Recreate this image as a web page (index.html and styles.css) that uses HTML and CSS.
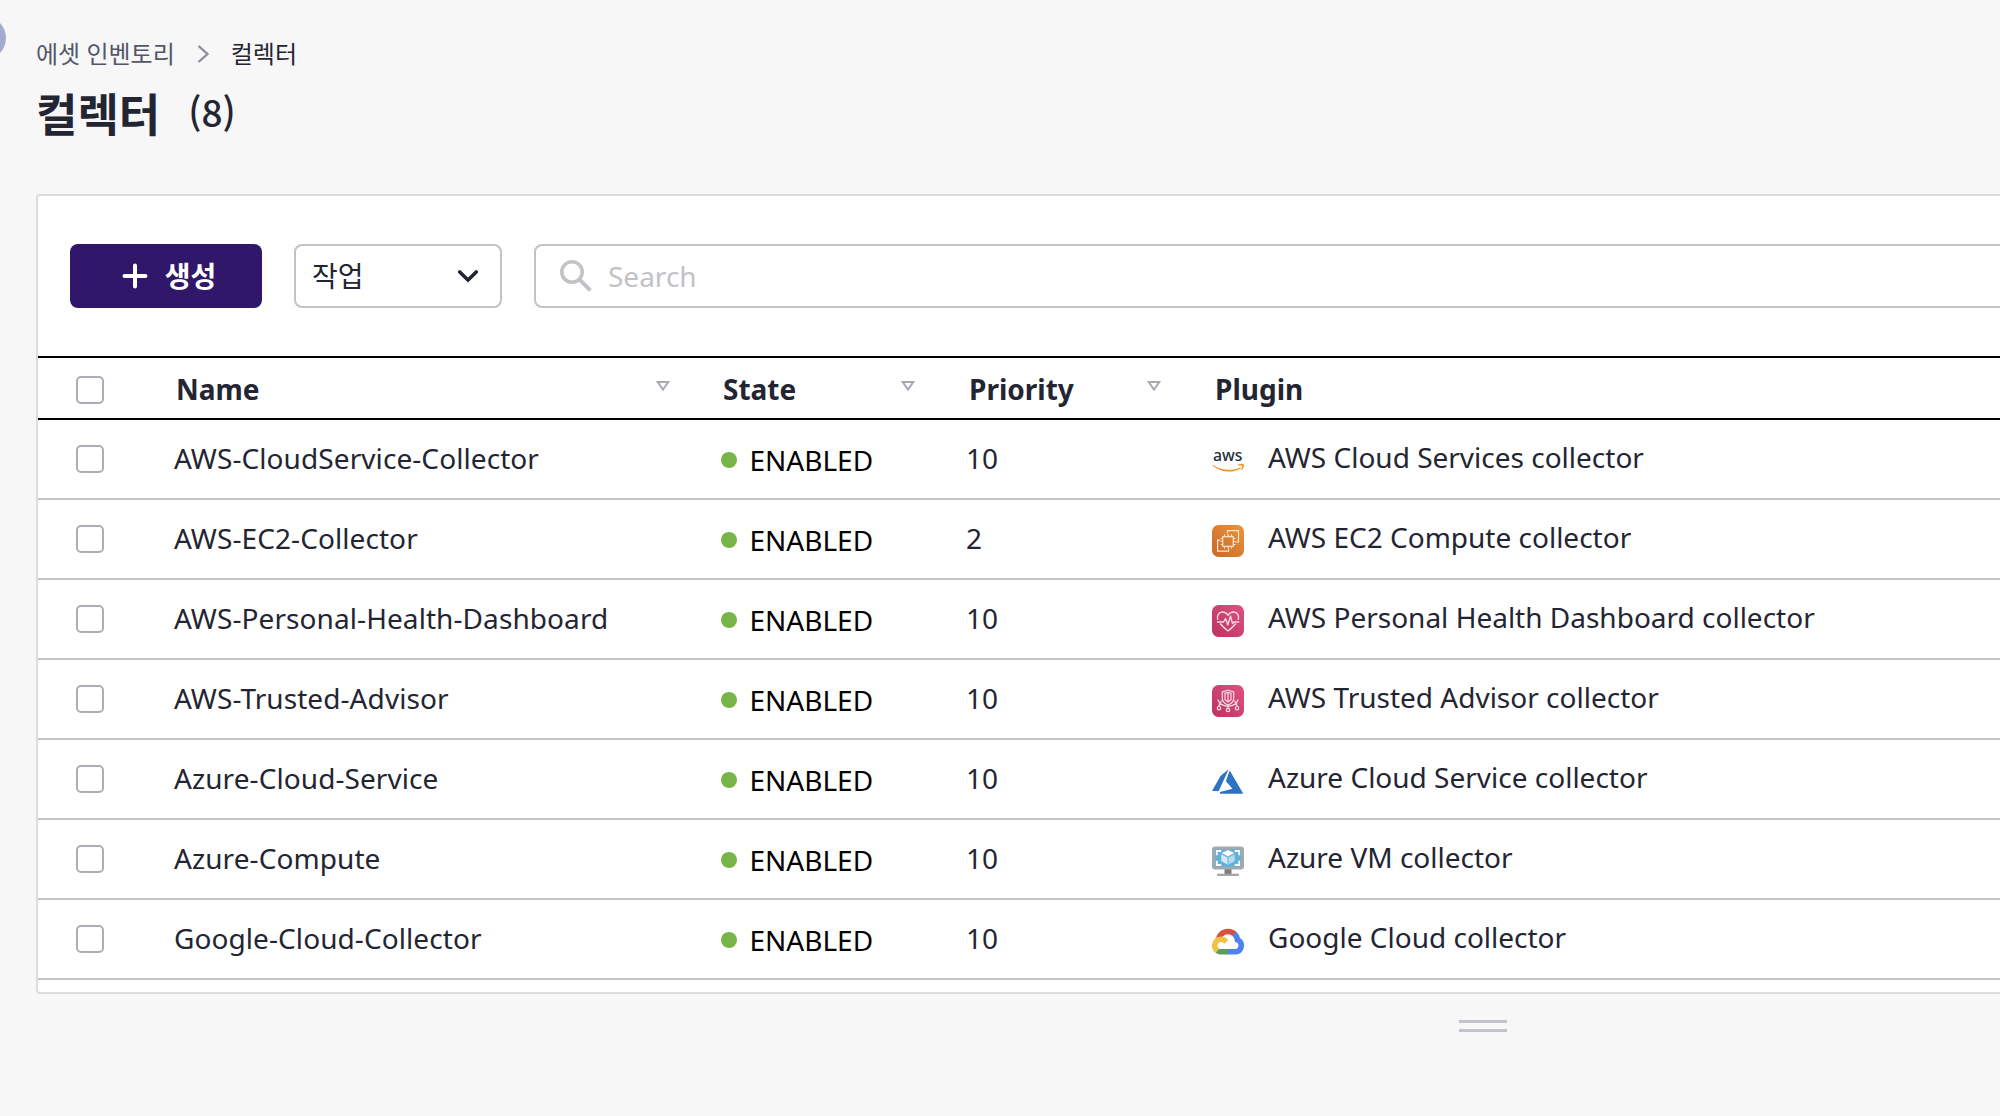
FILE: index.html
```html
<!DOCTYPE html>
<html lang="ko">
<head>
<meta charset="utf-8">
<title>컬렉터</title>
<link rel="stylesheet" href="styles.css">
</head>
<body>
<span class="side-toggle"></span>
<main class="page">
  <nav class="breadcrumb">
    <span class="crumb">에셋 인벤토리</span>
    <svg class="crumb-arrow" width="13" height="18" viewBox="0 0 13 18"><path d="M1.500 1 10.500 9 1.500 17" fill="none" stroke="#8c8a99" stroke-width="2.300"/></svg>
    <span class="crumb current">컬렉터</span>
  </nav>
  <h1 class="title">컬렉터<span class="count">(8)</span></h1>

  <section class="card">
    <div class="toolbar">
      <button class="create"><svg width="26" height="26" viewBox="0 0 26 26"><path d="M13 2.500v21M2.500 13h21" stroke="#fff" stroke-width="4" stroke-linecap="round"/></svg><span>생성</span></button>
      <div class="select"><span>작업</span><svg width="22" height="14" viewBox="0 0 22 14"><path d="M2.700 3 11 11 19.300 3" fill="none" stroke="#232533" stroke-width="3.600" stroke-linecap="round"/></svg></div>
      <div class="search"><svg width="32" height="32" viewBox="0 0 32 32" fill="none" stroke="#c2c2c7"><circle cx="12" cy="12" r="10.200" stroke-width="3.600"/><path d="M19.500 19.500 30.300 30.300" stroke-width="4"/></svg><span>Search</span></div>
    </div>

    <div class="row head">
      <div class="cell"><span class="check"></span></div>
      <div class="cell">Name<svg class="sort" width="14" height="10" viewBox="0 0 14 10"><path d="M1.700 1h10.600L7 8.600z"/></svg></div>
      <div class="cell">State<svg class="sort" width="14" height="10" viewBox="0 0 14 10"><path d="M1.700 1h10.600L7 8.600z"/></svg></div>
      <div class="cell">Priority<svg class="sort" width="14" height="10" viewBox="0 0 14 10"><path d="M1.700 1h10.600L7 8.600z"/></svg></div>
      <div class="cell">Plugin</div>
    </div>

    <div class="row">
      <div class="cell"><span class="check"></span></div>
      <div class="cell name">AWS-CloudService-Collector</div>
      <div class="cell state"><i class="dot"></i>ENABLED</div>
      <div class="cell priority">10</div>
      <div class="cell plugin"><svg class="logo" viewBox="0 0 32 32"><text class="aws-word" x="1" y="15.600" textLength="29.500" lengthAdjust="spacingAndGlyphs">aws</text><path d="M.5 19.500C9 26 21 26.200 28.500 22.200l.7 1C21 28.500 8 27.500.3 20.200z" fill="#f0962e"/><path d="M25.500 20c2-1.400 5-1.600 6.200-.8.600 1.800-.5 4.500-2 6.200l-.6-.4c.7-1.500 1.200-3.200.8-4-.8-.6-2.600-.6-4.200-.4z" fill="#f0962e"/></svg><span>AWS Cloud Services collector</span></div>
    </div>
    <div class="row">
      <div class="cell"><span class="check"></span></div>
      <div class="cell name">AWS-EC2-Collector</div>
      <div class="cell state"><i class="dot"></i>ENABLED</div>
      <div class="cell priority">2</div>
      <div class="cell plugin"><svg class="logo" viewBox="0 0 32 32"><defs><linearGradient id="ec2" x1="0" y1="1" x2="1" y2="0"><stop offset="0" stop-color="#c8682b"/><stop offset="1" stop-color="#ec9439"/></linearGradient></defs><rect width="32" height="32" rx="6.500" fill="url(#ec2)"/><g fill="none" stroke="#fbe6d2" stroke-width="1.200"><rect x="10.700" y="11.700" width="10.600" height="9.600"/><path d="M15.500 8.500V5.600h11V17h-3.200M8.300 15.200H5.600v11h11v-2.800"/><path d="M12.500 9.300v2M16 9.300v2M19.500 9.300v2M12.500 21.500v2M16 21.500v2M19.500 21.500v2M8.600 13.500h2M8.600 16.500h2M8.600 19.500h2M21.500 13.500h2M21.500 16.500h2M21.500 19.500h2"/></g></svg><span>AWS EC2 Compute collector</span></div>
    </div>
    <div class="row">
      <div class="cell"><span class="check"></span></div>
      <div class="cell name">AWS-Personal-Health-Dashboard</div>
      <div class="cell state"><i class="dot"></i>ENABLED</div>
      <div class="cell priority">10</div>
      <div class="cell plugin"><svg class="logo" viewBox="0 0 32 32"><defs><linearGradient id="pink" x1="0" y1="1" x2="1" y2="0"><stop offset="0" stop-color="#b83560"/><stop offset="1" stop-color="#e0517f"/></linearGradient></defs><rect width="32" height="32" rx="6.500" fill="url(#pink)"/><g fill="none" stroke="#fbdce6" stroke-width="1.300" stroke-linejoin="round"><path d="M5.800 14.800C4.600 10.300 7 7 10.300 7c2.600 0 4.600 1.400 5.700 3.400C17.100 8.400 19.100 7 21.700 7c3.300 0 5.700 3.300 4.500 7.800M8.200 18.500c2 2.700 4.700 5 7.800 7.400 3.100-2.400 5.800-4.700 7.800-7.400"/><path d="M5 17h6.500l2-3.500 2.300 6.500 2.700-9 2 7.500 1.500-1.500h5.200"/></g></svg><span>AWS Personal Health Dashboard collector</span></div>
    </div>
    <div class="row">
      <div class="cell"><span class="check"></span></div>
      <div class="cell name">AWS-Trusted-Advisor</div>
      <div class="cell state"><i class="dot"></i>ENABLED</div>
      <div class="cell priority">10</div>
      <div class="cell plugin"><svg class="logo" viewBox="0 0 32 32"><rect width="32" height="32" rx="6.500" fill="url(#pink)"/><g fill="none" stroke="#fbdce6" stroke-width="1.200"><path d="M16 5.200 21.700 7v6.500c0 3-2.200 5-5.700 6.500-3.500-1.500-5.700-3.500-5.700-6.500V7z"/><path d="M13 8.200 16 7.400l3 .8v6.600L16 17l-3-2.200zM16 7.500V17M16 20v3.200M9.500 15.500l-3 6M22.500 15.500l3 6M5.800 14.500c1.200 4 5 6.500 10.200 6.800 5.200-.3 9-2.800 10.200-6.800"/><circle cx="16" cy="25" r="1.700"/><circle cx="7" cy="23.200" r="1.700"/><circle cx="25" cy="23.200" r="1.700"/></g></svg><span>AWS Trusted Advisor collector</span></div>
    </div>
    <div class="row">
      <div class="cell"><span class="check"></span></div>
      <div class="cell name">Azure-Cloud-Service</div>
      <div class="cell state"><i class="dot"></i>ENABLED</div>
      <div class="cell priority">10</div>
      <div class="cell plugin"><svg class="logo" viewBox="0 0 32 32"><path d="M16.600 4.200 8.500 11 0 26h6.800zM17.700 5.500 13.900 16.200l6.600 7.600L7.800 27l.2 1.700h23.300z" fill="#2d72c4"/></svg><span>Azure Cloud Service collector</span></div>
    </div>
    <div class="row">
      <div class="cell"><span class="check"></span></div>
      <div class="cell name">Azure-Compute</div>
      <div class="cell state"><i class="dot"></i>ENABLED</div>
      <div class="cell priority">10</div>
      <div class="cell plugin"><svg class="logo" viewBox="0 0 32 32"><path d="M12.500 24h7v5h-7z" fill="#7c7d7f"/><rect x="5" y="28.800" width="22" height="2.200" rx="1" fill="#a3a4a6"/><rect y="1.400" width="32" height="23" rx="3" fill="#a6a8aa"/><rect x="3" y="4.300" width="26" height="17.400" fill="#62b1d8"/><path d="M4.800 10.300V6h4.400M22.800 6h4.400v4.300M27.200 15.700V20h-4.400M9.200 20H4.800v-4.300" fill="none" stroke="#fff" stroke-width="1.800"/><path d="M16 5l6.200 3-6.200 3.400L9.800 8z" fill="#fff"/><path d="M9.300 9.300l6.200 3.200v7l-6.200-3.400z" fill="#d6ebf5"/><path d="M22.700 9.300l-6.200 3.200v7l6.200-3.400z" fill="#b4dcee"/></svg><span>Azure VM collector</span></div>
    </div>
    <div class="row">
      <div class="cell"><span class="check"></span></div>
      <div class="cell name">Google-Cloud-Collector</div>
      <div class="cell state"><i class="dot"></i>ENABLED</div>
      <div class="cell priority">10</div>
      <div class="cell plugin"><svg class="logo" viewBox="0 0 32 32"><path d="M20.300 10.800h1l2.800-2.800.1-1.200A12.500 12.500 0 0 0 3.900 12.900c.3-.1 1-.2 1-.2l5.600-.9s.3-.5.4-.4a7 7 0 0 1 9.400-.6z" fill="#d8503f"/><path d="M28 12.900a12.600 12.600 0 0 0-3.800-6.100l-3.900 4a7 7 0 0 1 2.600 5.500v.7a3.500 3.500 0 0 1 0 7H16l-.7.7v4.200l.7.700h6.900A9.100 9.100 0 0 0 28 12.900z" fill="#4f82ee"/><path d="M9 29.600h7V24H9a3.500 3.500 0 0 1-1.400-.3l-1 .3-2.800 2.800-.3 1A9 9 0 0 0 9 29.600z" fill="#55a15b"/><path d="M9 11.500a9.100 9.100 0 0 0-5.500 16.300l4.100-4.100a3.500 3.500 0 1 1 4.600-4.600l4.100-4.100A9.100 9.100 0 0 0 9 11.500z" fill="#f2c043"/></svg><span>Google Cloud collector</span></div>
    </div>
  </section>
  <div class="grip"></div>
</main>
</body>
</html>
```
FILE: styles.css
```css
* { box-sizing: border-box; }

body {
  margin: 0;
  height: 1116px;
  overflow: hidden;
  background: #f7f7f7;
  color: #232533;
  font-family: "Noto Sans", "Noto Sans CJK KR", sans-serif;
  font-size: 28px;
}

svg { display: block; flex: none; }

.side-toggle {
  position: absolute;
  left: -38px;
  top: 16px;
  width: 44px;
  height: 44px;
  border-radius: 50%;
  background: #a5abce;
}

.page { padding-left: 36px; }

.breadcrumb {
  display: flex;
  align-items: center;
  height: 36px;
  padding-bottom: 1px;
  margin-top: 35px;
  font-size: 24px;
}

.crumb { color: #55566a; }
.crumb.current { color: #232533; }
.crumb-arrow { margin: 2px 21px 0 22px; }

.title {
  display: flex;
  align-items: flex-start;
  height: 64px;
  margin: 13px 0 0;
  font-size: 45px;
  line-height: 61px;
  font-weight: 700;
}

.count {
  margin-left: 28px;
  font-family: "Noto Sans CJK KR", sans-serif;
  font-size: 37px;
  line-height: 54px;
  font-weight: 500;
}

.card {
  width: 2000px;
  height: 800px;
  margin-top: 46px;
  border: 2px solid #dcdcdd;
  border-radius: 4px;
  background: #fff;
}

.toolbar {
  display: flex;
  gap: 32px;
  height: 160px;
  padding: 48px 0 48px 32px;
}

.create {
  display: flex;
  align-items: center;
  justify-content: center;
  gap: 17px;
  width: 192px;
  padding: 0 0 0 6px;
  border: 0;
  border-radius: 8px;
  background: #30176a;
  color: #fff;
  font: inherit;
  font-weight: 700;
}

.create span, .select span { padding-bottom: 2px; }

.select {
  display: flex;
  align-items: center;
  justify-content: space-between;
  width: 208px;
  padding: 0 21px 0 16px;
  border: 2px solid #c2c2c7;
  border-radius: 8px;
}

.search {
  display: flex;
  align-items: center;
  gap: 16px;
  flex: 1;
  padding-left: 24px;
  border: 2px solid #c2c2c7;
  border-radius: 8px;
  color: #c2c2c7;
}

.row {
  display: grid;
  grid-template-columns: 136px 546px 246px 246px 1fr;
  height: 80px;
  border-bottom: 2px solid #c2c2c7;
}

.cell {
  display: flex;
  align-items: center;
  white-space: nowrap;
}

.name {
  padding-bottom: 2px;
  letter-spacing: 0.08px;
}

.priority { padding-bottom: 2px; }

.check {
  width: 28px;
  height: 28px;
  margin-left: 38px;
  border: 2px solid #aeadb6;
  border-radius: 5px;
}

.head {
  height: 64px;
  border-top: 2px solid #000;
  border-bottom-color: #000;
  font-weight: 700;
}

.head .cell { padding: 1px 0 0 3px; }
.head .cell:first-child { padding: 3px 0 0; }
.head .cell:nth-child(2) { padding-left: 2px; }

.sort {
  margin: 0 51px 6px auto;
  fill: none;
  stroke: #a9a9b5;
  stroke-width: 2;
}

.head .cell:nth-child(2) .sort { margin-right: 50px; }

.state { color: #000; padding-top: 2px; }

.dot {
  width: 16px;
  height: 16px;
  margin: 0 12.500px 1px 1px;
  border-radius: 50%;
  background: #76b546;
}

.plugin { gap: 24px; }
.plugin span { padding-bottom: 4px; }

.logo {
  width: 32px;
  height: 32px;
  margin-top: 4px;
  overflow: visible;
}

.aws-word {
  font-size: 17px;
  font-weight: 500;
  fill: #252f3e;
}

.grip {
  width: 48px;
  height: 12px;
  margin: 26px 0 0 1423px;
  border: solid #c4c3c9;
  border-width: 3px 0;
}
```
